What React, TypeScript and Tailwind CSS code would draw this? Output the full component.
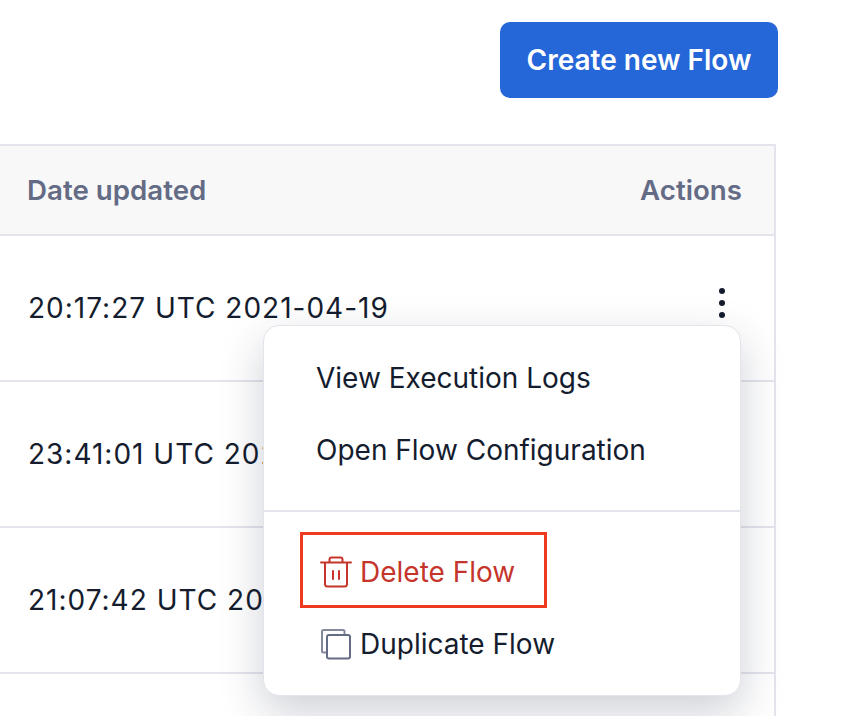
const rows = ["20:17:27 UTC 2021-04-19", "23:41:01 UTC 2021-04-19", "21:07:42 UTC 2021-04-19"];

function CopyIcon() {
	return (
		<svg width="32" height="32" viewBox="0 0 32 32" fill="none" stroke="#646b85" strokeWidth="2">
			<path d="M7 24.5H3.5A1.5 1.5 0 0 1 2 23V3.5A1.5 1.5 0 0 1 3.5 2H23A1.5 1.5 0 0 1 24.5 3.5V7" strokeOpacity="0.8" />
			<rect x="7" y="7" width="23" height="23.5" rx="2" />
		</svg>
	);
}

function TrashIcon() {
	return (
		<svg width="32" height="32" viewBox="0 0 32 32" fill="none" stroke="#c5352b" strokeWidth="2" strokeLinecap="round">
			<path d="M1 6.5H31" />
			<path d="M9.500 6V3.500A2 2 0 0 1 11.500 1.500H20.500A2 2 0 0 1 22.500 3.500V6" />
			<path d="M5 7V28A2.500 2.500 0 0 0 7.500 30.500H24.500A2.500 2.500 0 0 0 27 28V7" />
			<path d="M13 15V23M19 15V23" />
		</svg>
	);
}

export default function App() {
	return (
		<div className="relative h-[716px] w-[846px] overflow-hidden bg-white font-['Inter',sans-serif] text-[28px] text-[#141c2e]">
			<div className="flex justify-end pt-[22px] pr-[68px]">
				<button className="flex h-[76px] w-[278px] items-center justify-center rounded-[10px] bg-[#2566d8] text-[28px] font-semibold text-white">
					Create new Flow
				</button>
			</div>

			<div className="mt-[46px] w-[776px] border-t-2 border-r-2 border-[#e4e4ec]">
				<div className="flex h-[90px] items-center justify-between border-b-2 border-[#e4e4ec] bg-[#f8f8f9] pt-px pr-[32px] pl-[27px] text-[27.7px] font-semibold text-[#646b85]">
					<span>Date updated</span>
					<span>Actions</span>
				</div>
				{rows.map((date) => (
					<div key={date} className="flex h-[146px] items-center justify-between border-b-2 border-[#e4e4ec] pl-[28px]">
						<span className="tracking-[1px]">{date}</span>
					</div>
				))}
				<div className="h-[60px]" />
			</div>

			{/* kebab */}
			<div className="absolute top-[288px] left-[719px] flex flex-col gap-[6px]">
				<span className="h-[6px] w-[6px] rounded-full bg-[#141c2e]" />
				<span className="h-[6px] w-[6px] rounded-full bg-[#141c2e]" />
				<span className="h-[6px] w-[6px] rounded-full bg-[#141c2e]" />
			</div>

			{/* Dropdown menu */}
			<div className="absolute top-[325px] left-[263px] h-[371px] w-[478px] rounded-[16px] border border-[#e4e4ec] bg-white shadow-[0_16px_44px_rgba(30,40,70,0.22)]">
				<div className="flex h-[186px] flex-col border-b-2 border-[#e4e4ec] pt-[16px] pl-[52px]">
					<div className="flex h-[72px] items-center">View Execution Logs</div>
					<div className="flex h-[72px] items-center">Open Flow Configuration</div>
				</div>
				<div className="flex flex-col pt-[24px] pl-[56px]">
					<div className="flex h-[72px] items-center gap-[8px] text-[#c5352b]">
						<TrashIcon />
						<span>Delete Flow</span>
					</div>
					<div className="flex h-[72px] items-center gap-[8px]">
						<CopyIcon />
						<span>Duplicate Flow</span>
					</div>
				</div>
			</div>

			{/* annotation */}
			<div className="absolute top-[532px] left-[300px] h-[76px] w-[247px] border-[3px] border-[#ee3a1f]" />
		</div>
	);
}
